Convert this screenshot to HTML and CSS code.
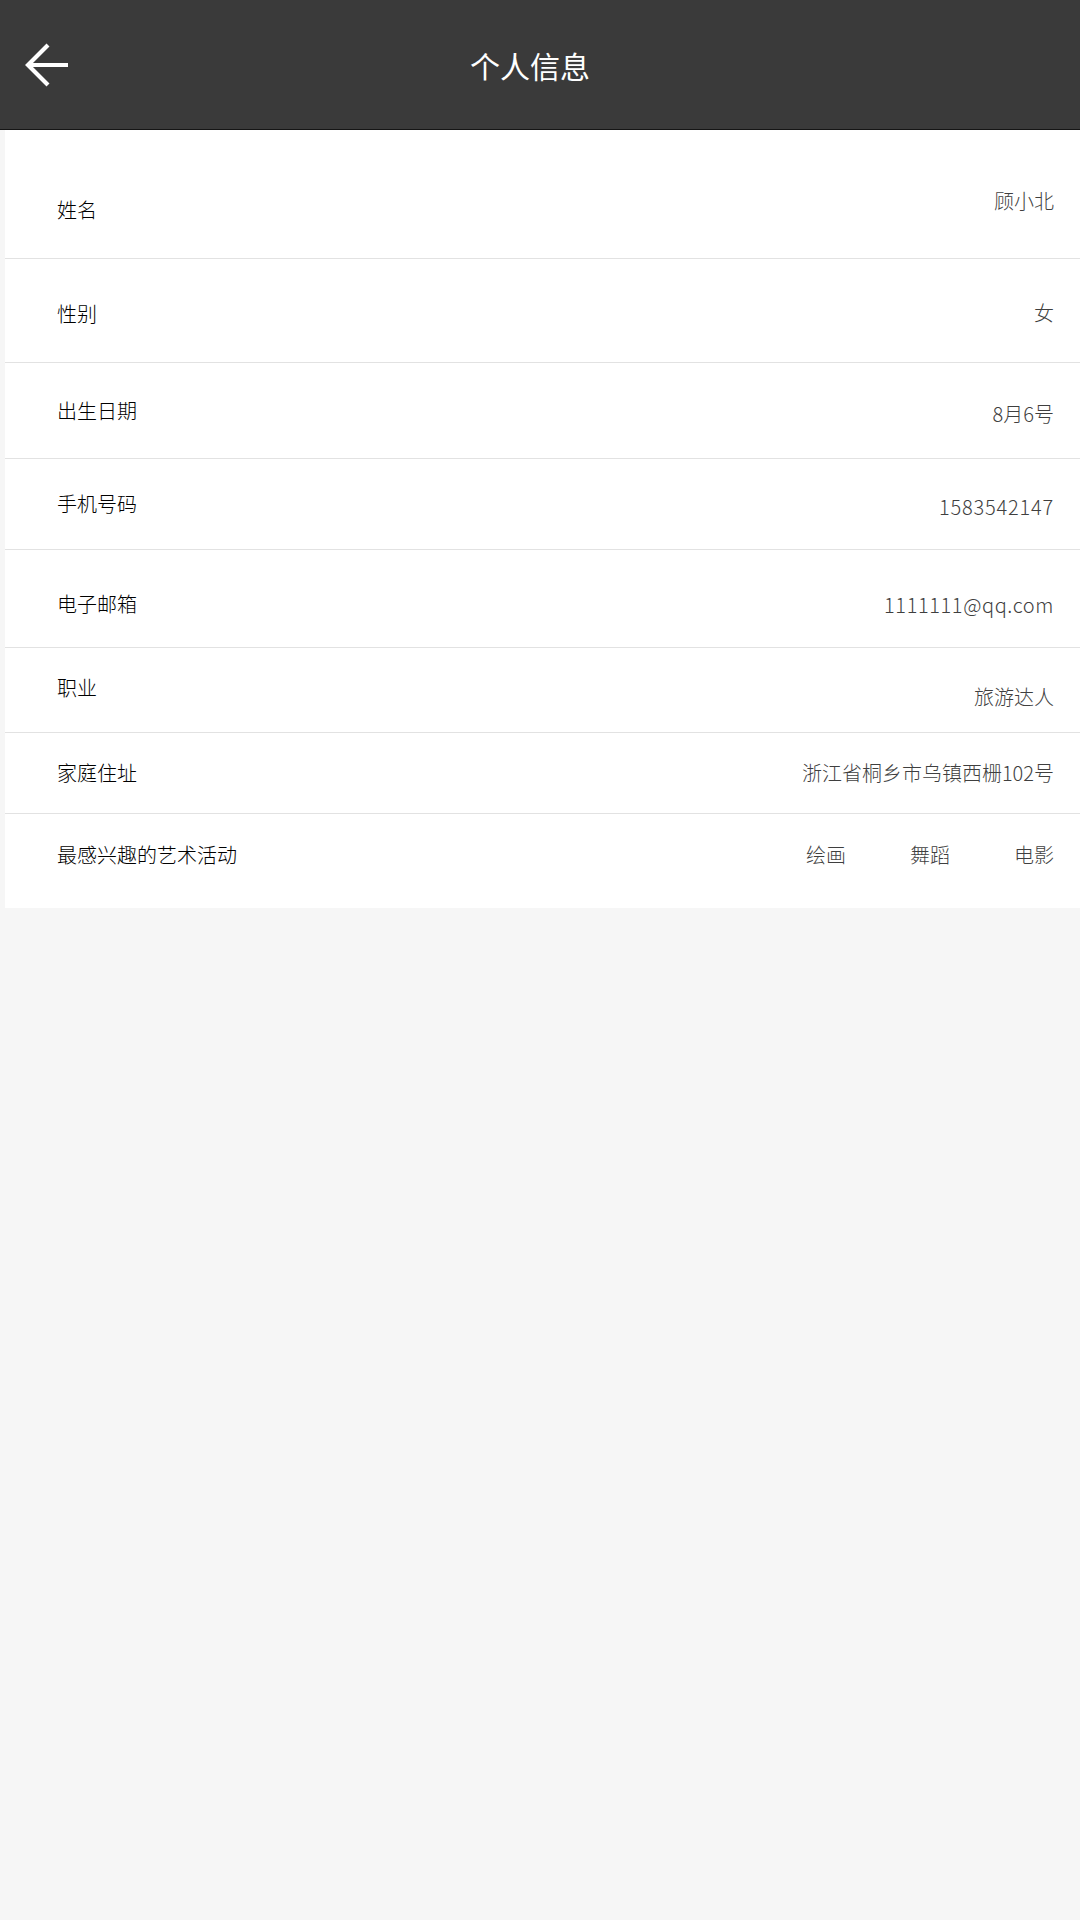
FILE: index.html
```html
<!DOCTYPE html>
<html lang="zh-CN">
<head>
<meta charset="utf-8">
<title>个人信息</title>
<link rel="stylesheet" href="styles.css">
</head>
<body>
<header class="topbar">
  <a class="back" href="#" aria-label="返回">
    <svg viewBox="0 0 48 48" width="48" height="48">
      <path d="M46 24 H6 M26 4 L6 24 L26 44" fill="none" stroke="#ffffff" stroke-width="4.2" stroke-linecap="butt" stroke-linejoin="miter"/>
    </svg>
  </a>
  <h1 class="title">个人信息</h1>
</header>
<main class="info">
  <div class="row row-name"><span class="label">姓名</span><span class="value">顾小北</span></div>
  <div class="row row-sex"><span class="label">性别</span><span class="value">女</span></div>
  <div class="row row-birth"><span class="label">出生日期</span><span class="value">8月6号</span></div>
  <div class="row row-phone"><span class="label">手机号码</span><span class="value digits">1583542147</span></div>
  <div class="row row-mail"><span class="label">电子邮箱</span><span class="value mail">1111111@qq.com</span></div>
  <div class="row row-job"><span class="label">职业</span><span class="value">旅游达人</span></div>
  <div class="row row-addr"><span class="label">家庭住址</span><span class="value">浙江省桐乡市乌镇西栅102号</span></div>
  <div class="row row-hobby"><span class="label">最感兴趣的艺术活动</span><span class="value tags"><span class="tag">绘画</span><span class="tag">舞蹈</span><span class="tag">电影</span></span></div>
</main>
</body>
</html>
```
FILE: styles.css
```css
* { box-sizing: border-box; }
html, body { margin: 0; padding: 0; }
body {
  width: 1080px;
  min-height: 1920px;
  background: #f6f6f6;
  font-family: "Noto Sans CJK SC", "Noto Sans", sans-serif;
  font-weight: 300;
  color: #000000;
}
.topbar {
  height: 130px;
  background: #3a3a3a;
  border-bottom: 1px solid #151515;
  display: flex;
  align-items: center;
}
.back {
  display: flex;
  margin-left: 22px;
  width: 48px;
  height: 48px;
}
.title {
  flex: 1;
  margin: 0;
  padding-right: 90px;
  text-align: center;
  color: #ffffff;
  font-size: 30px;
  font-weight: 400;
  line-height: 40px;
}
.info {
  margin-left: 5px;
  background: #ffffff;
}
.row {
  display: flex;
  justify-content: space-between;
  align-items: flex-start;
  padding: 0 26px 0 52px;
  border-bottom: 1px solid #e2e2e2;
  font-size: 20px;
  line-height: 28px;
}
.row:last-child { border-bottom: none; }
.label { color: #000000; }
.value { color: #3f3f3f; }
.digits { letter-spacing: 0.8px; }
.mail { letter-spacing: 0.6px; }
.tags { display: flex; gap: 64px; }

.row-name { height: 129px; }
.row-name .label { margin-top: 66px; }
.row-name .value { margin-top: 57px; }

.row-sex { height: 104px; }
.row-sex .label { margin-top: 41px; }
.row-sex .value { margin-top: 40px; }

.row-birth { height: 96px; }
.row-birth .label { margin-top: 34px; }
.row-birth .value { margin-top: 37px; }

.row-phone { height: 91px; }
.row-phone .label { margin-top: 31px; }
.row-phone .value { margin-top: 34px; }

.row-mail { height: 98px; }
.row-mail .label { margin-top: 40px; }
.row-mail .value { margin-top: 41px; }

.row-job { height: 85px; }
.row-job .label { margin-top: 26px; }
.row-job .value { margin-top: 35px; }

.row-addr { height: 81px; }
.row-addr .label { margin-top: 26px; }
.row-addr .value { margin-top: 26px; }

.row-hobby { height: 94px; }
.row-hobby .label { margin-top: 27px; }
.row-hobby .value { margin-top: 27px; }
```
